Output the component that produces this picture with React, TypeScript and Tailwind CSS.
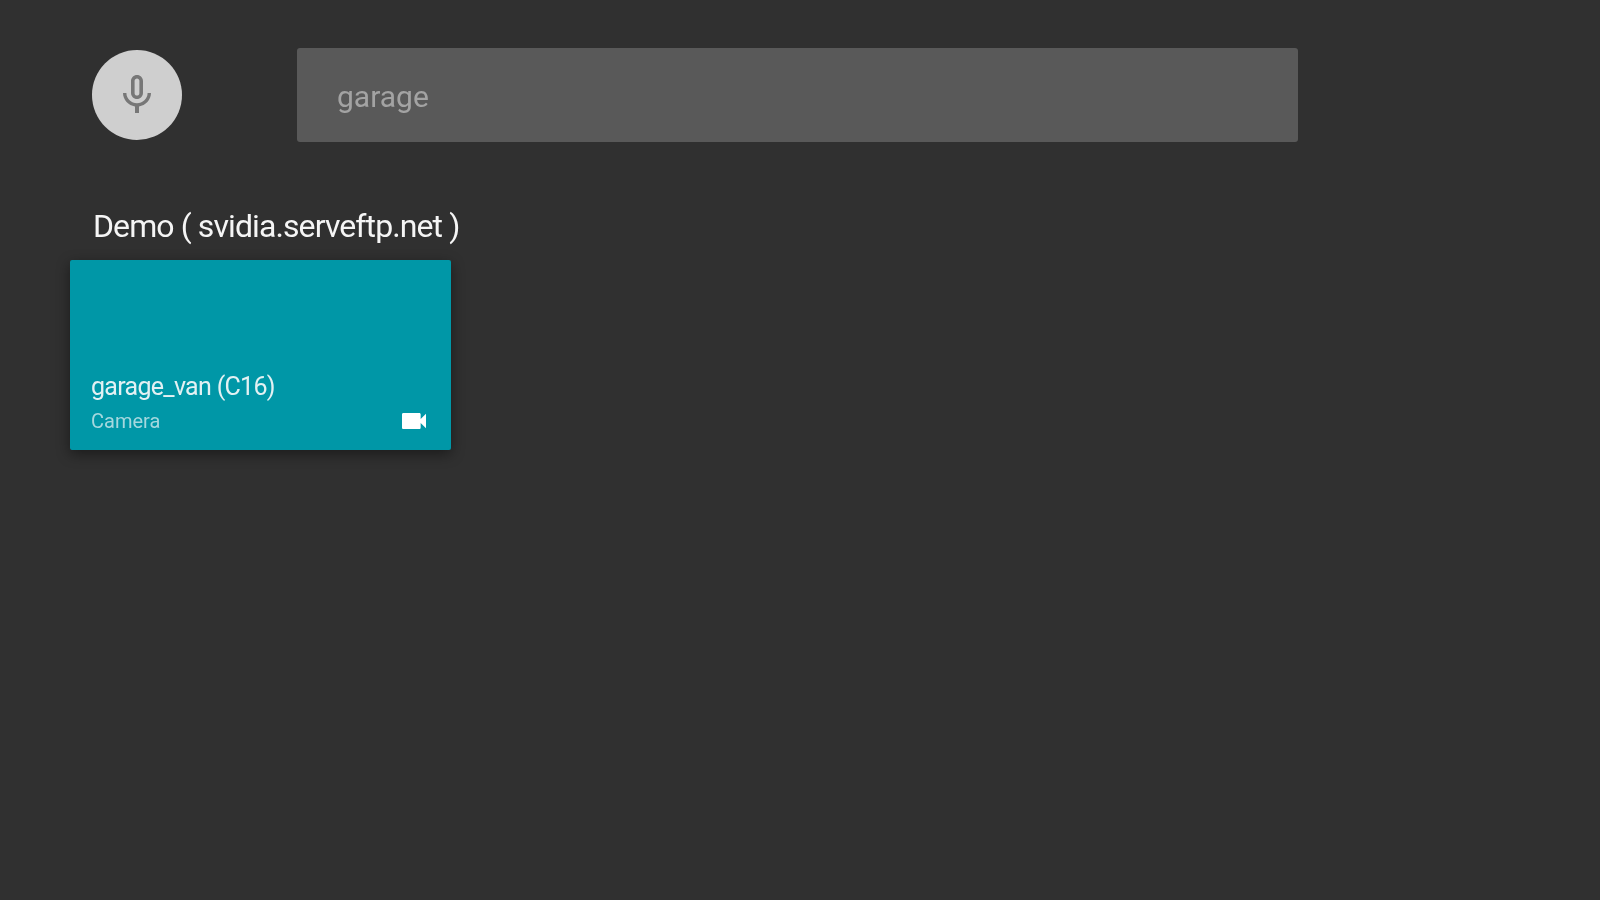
export default function App() {
  return (
    <div className="h-screen w-full overflow-hidden bg-[#303030] font-['Roboto',sans-serif]">
      <div className="blur-[0.7px]">
        <div className="flex items-center pt-[48px] pl-[92px]">
          <button className="flex h-[90px] w-[90px] items-center justify-center rounded-full bg-[#cfcfcf]">
            <svg viewBox="0 0 24 24" className="h-[48px] w-[48px] fill-[#777777]">
              <path d="M12 14c1.66 0 2.99-1.34 2.99-3L15 5c0-1.66-1.34-3-3-3S9 3.34 9 5v6c0 1.66 1.34 3 3 3zm-1.2-9.1c0-.66.54-1.2 1.2-1.2.66 0 1.2.54 1.2 1.2l-.01 6.2c0 .66-.53 1.2-1.19 1.2-.66 0-1.2-.54-1.2-1.2V4.9zm6.5 6.1c0 3-2.54 5.1-5.3 5.1S6.7 14 6.7 11H5c0 3.41 2.72 6.23 6 6.72V21h2v-3.28c3.28-.48 6-3.3 6-6.72h-1.7z" />
            </svg>
          </button>
          <div className="ml-[115px] flex h-[94px] w-[1001px] items-center rounded-[3px] bg-[#595959] pt-[3px] pl-[40px]">
            <span className="text-[30px] text-[#a3a3a3]">garage</span>
          </div>
        </div>

        <div className="mt-[57px] pl-[93px] text-[32px] leading-[54px] tracking-[-0.9px] text-[#f5f5f5]">
          Demo ( svidia.serveftp.net )
        </div>

        <div className="mt-[7px] ml-[70px] flex h-[190px] w-[381px] flex-col justify-end rounded-[2px] bg-[#0097a7] px-[21px] pb-[12px] shadow-[0_4px_14px_rgba(0,0,0,0.45)]">
          <div className="text-[25px] leading-[34px] tracking-[-0.7px] text-[#e3f1f3]">garage_van (C16)</div>
          <div className="flex items-center justify-between">
            <span className="text-[20px] leading-[34px] text-[#a5d8de]">Camera</span>
            <svg viewBox="0 0 24 24" className="h-[32px] w-[32px] fill-white">
              <path d="M17 10.5V7c0-.55-.45-1-1-1H4c-.55 0-1 .45-1 1v10c0 .55.45 1 1 1h12c.55 0 1-.45 1-1v-3.5l4 4v-11l-4 4z" />
            </svg>
          </div>
        </div>
      </div>
    </div>
  )
}
